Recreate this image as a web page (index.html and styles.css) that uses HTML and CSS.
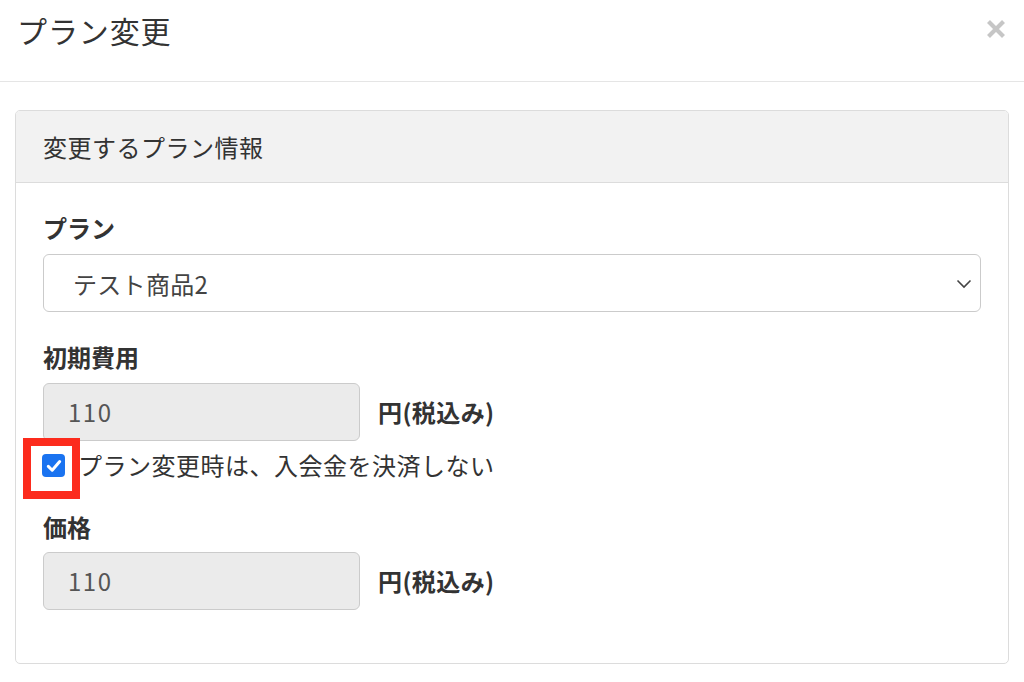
FILE: index.html
```html
<!DOCTYPE html>
<html lang="ja">
<head>
<meta charset="utf-8">
<title>プラン変更</title>
<link rel="stylesheet" href="styles.css">
</head>
<body>
<div class="modal">
  <div class="modal-header">
    <h4 class="modal-title">プラン変更</h4>
    <button class="close" type="button" aria-label="close">
      <svg width="20" height="18" viewBox="0 0 20 18"><path d="M2.5 1.5 L17.5 16.5 M17.5 1.5 L2.5 16.5" stroke="#c6c6c6" stroke-width="4.2" stroke-linecap="butt"/></svg>
    </button>
  </div>
  <div class="modal-body">
    <div class="panel">
      <div class="panel-heading">変更するプラン情報</div>
      <div class="panel-body">
        <div class="label">プラン</div>
        <div class="select">
          <span>テスト商品2</span>
          <svg class="chev" width="16" height="10" viewBox="0 0 16 10"><path d="M1.5 1.5 L8 8 L14.5 1.5" fill="none" stroke="#444" stroke-width="1.6"/></svg>
        </div>

        <div class="label gap">初期費用</div>
        <div class="price-row">
          <div class="input">110</div>
          <span class="unit">円(税込み)</span>
        </div>
        <div class="check-row">
          <span class="check-wrap">
            <span class="checkbox">
              <svg width="16" height="14" viewBox="0 0 16 14"><path d="M2.3 7.4 L6.2 11.2 L13.7 2.6" fill="none" stroke="#fff" stroke-width="3" stroke-linecap="round" stroke-linejoin="round"/></svg>
            </span>
            <span class="highlight"></span>
          </span>
          <span class="check-text">プラン変更時は、入会金を決済しない</span>
        </div>

        <div class="label gap2">価格</div>
        <div class="price-row">
          <div class="input">110</div>
          <span class="unit">円(税込み)</span>
        </div>
      </div>
    </div>
  </div>
</div>
</body>
</html>
```

FILE: styles.css
```css
* { box-sizing: border-box; }
html, body {
  margin: 0;
  padding: 0;
  background: #fff;
  font-family: "Noto Sans CJK JP", "Noto Sans", "Liberation Sans", sans-serif;
  color: #333;
}
.modal {
  width: 1024px;
  height: 682px;
  overflow: hidden;
}
.modal-header {
  height: 82px;
  border-bottom: 1px solid #e5e5e5;
  display: flex;
  align-items: flex-start;
  justify-content: space-between;
  padding: 0 18px 0 17px;
}
.modal-title {
  margin: 0;
  font-size: 30px;
  font-weight: 400;
  line-height: 30px;
  margin-top: 15px;
  color: #333;
  letter-spacing: 0.9px;
}
.close {
  border: 0;
  background: transparent;
  padding: 0;
  margin-top: 20px;
  width: 20px;
  height: 18px;
  display: block;
}
.close svg { display: block; }
.modal-body {
  padding: 28px 15px 0 15px;
}
.panel {
  border: 1px solid #dcdcdc;
  border-radius: 5px;
  height: 554px;
}
.panel-heading {
  background: #f2f2f2;
  height: 72px;
  border-bottom: 1px solid #dcdcdc;
  border-radius: 4px 4px 0 0;
  padding-left: 27px;
  font-size: 24px;
  line-height: 71px;
  color: #333;
  letter-spacing: 0.5px;
}
.panel-body {
  padding: 30px 27px 0 27px;
}
.label {
  font-size: 24px;
  font-weight: 700;
  line-height: 30px;
  height: 30px;
  margin-bottom: 11px;
  color: #333;
}
.label.gap { margin-top: 30px; }
.label.gap2 { margin-top: 32px; margin-bottom: 10px; }
.select {
  height: 58px;
  border: 1px solid #cbcbcb;
  border-radius: 6px;
  display: flex;
  align-items: center;
  justify-content: space-between;
  padding: 0 8px 0 29px;
  font-size: 24px;
  color: #444;
  letter-spacing: 0.3px;
}
.chev { display: block; margin-top: 2px; }
.price-row {
  display: flex;
  align-items: center;
  gap: 18px;
}
.input {
  width: 317px;
  height: 58px;
  background: #ebebeb;
  border: 1px solid #cbcbcb;
  border-radius: 6px;
  padding-left: 24px;
  font-size: 24px;
  line-height: 56px;
  color: #555;
  letter-spacing: 1.5px;
}
.unit {
  font-size: 24px;
  font-weight: 700;
  color: #333;
  margin-top: -2px;
  letter-spacing: 0.4px;
}
.check-row {
  margin-top: 9px;
  height: 30px;
  display: flex;
  align-items: center;
}
.check-wrap {
  position: relative;
  width: 22px;
  height: 22px;
  margin-left: -1px;
  margin-right: 14px;
}
.checkbox {
  width: 23px;
  height: 23px;
  background: #1a73f0;
  border-radius: 4px;
  display: flex;
  align-items: center;
  justify-content: center;
}
.checkbox svg { display: block; }
.highlight {
  position: absolute;
  left: -19px;
  top: -16px;
  width: 57px;
  height: 61px;
  border: 8px solid #fc2b1d;
}
.check-text {
  font-size: 24px;
  color: #333;
  line-height: 30px;
  letter-spacing: 0.5px;
}
```
